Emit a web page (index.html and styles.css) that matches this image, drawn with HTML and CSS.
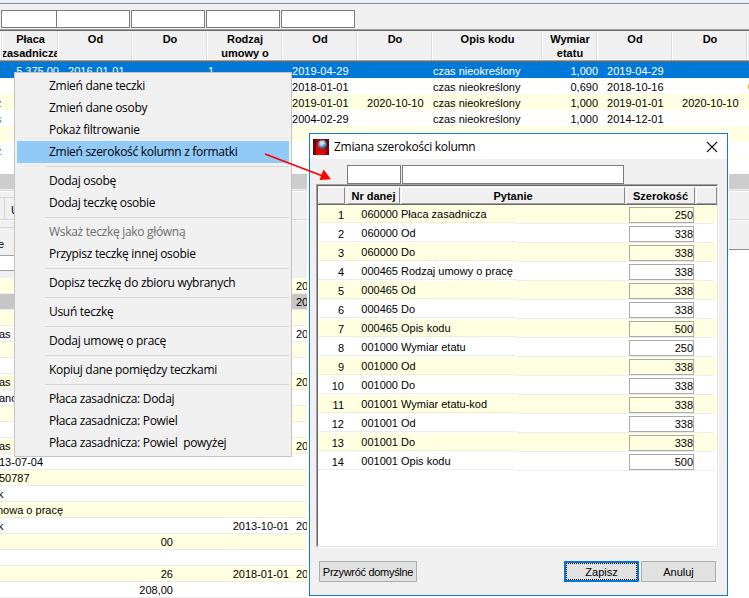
FILE: index.html
```html
<!DOCTYPE html>
<html lang="pl">
<head>
<meta charset="utf-8">
<title>Zmiana szerokości kolumn</title>
<link rel="stylesheet" href="styles.css">
</head>
<body>
<main class="app">
  <div class="topline"></div>
  <div class="filters"><i class="first"></i><i></i><i></i><i></i><i></i></div>
  <section class="people">
    <div class="cols head"><b></b><b>Płaca<br>zasadnicza</b><b>Od</b><b>Do</b><b>Rodzaj<br>umowy o</b><b>Od</b><b>Do</b><b>Opis kodu</b><b>Wymiar<br>etatu</b><b>Od</b><b>Do</b><b></b></div>
    <div class="cols row sel"><span></span><span class="num">5 375,00</span><span class="date">2016-01-01</span><span></span><span>1</span><span class="date">2019-04-29</span><span></span><span>czas nieokreślony</span><span class="num">1,000</span><span class="date">2019-04-29</span><span></span><span></span></div>
    <div class="cols row"><span></span><span></span><span></span><span></span><span></span><span class="date">2018-01-01</span><span></span><span>czas nieokreślony</span><span class="num">0,690</span><span class="date">2018-10-16</span><span></span><span class="amber">0</span></div>
    <div class="cols row alt"><span class="link">z</span><span></span><span></span><span></span><span></span><span class="date">2019-01-01</span><span class="date">2020-10-10</span><span>czas nieokreślony</span><span class="num">1,000</span><span class="date">2019-01-01</span><span class="date">2020-10-10</span><span></span></div>
    <div class="cols row"><span class="link">s</span><span></span><span></span><span></span><span></span><span class="date">2004-02-29</span><span></span><span>czas nieokreślony</span><span class="num">1,000</span><span class="date">2014-12-01</span><span></span><span></span></div>
    <div class="cols row alt"></div>
    <div class="cols row"><span class="link">z</span></div>
    <div class="thin"></div>
    <div class="track"></div>
  </section>
  <section class="band">
    <div class="band-a"></div>
    <div class="tabs"><i></i><span>U</span></div>
    <div class="band-b"></div>
  </section>
  <section class="details">
    <div class="caption">e</div>
    <div class="field"></div>
    <div class="gap"></div>
    <div class="drow alt"><span></span><span></span><span></span><span>20</span></div>
    <div class="drow cur"><span></span><span></span><span></span><span>20</span></div>
    <div class="drow alt"></div>
    <div class="drow"><span>as</span><span></span><span></span><span>20</span></div>
    <div class="drow alt"></div>
    <div class="drow"></div>
    <div class="drow alt"><span>as</span><span></span><span></span><span>20</span></div>
    <div class="drow"><span>ano</span></div>
    <div class="drow alt"></div>
    <div class="drow"></div>
    <div class="drow alt"><span>as</span><span></span><span></span><span>20</span></div>
    <div class="drow"><span>13-07-04</span></div>
    <div class="drow alt"><span>50787</span></div>
    <div class="drow"><span class="edge">k</span></div>
    <div class="drow alt"><span class="cut">nowa o pracę</span></div>
    <div class="drow"><span class="edge">k</span><span></span><span>2013-10-01</span><span>20</span></div>
    <div class="drow alt"><span></span><span>00</span></div>
    <div class="drow"></div>
    <div class="drow alt"><span></span><span>26</span><span>2018-01-01</span><span>20</span></div>
    <div class="drow"><span></span><span>208,00</span></div>
  </section>
</main>

<nav class="menu">
  <a>Zmień dane teczki</a>
  <a>Zmień dane osoby</a>
  <a>Pokaż filtrowanie</a>
  <a class="hot">Zmień szerokość kolumn z formatki</a>
  <hr>
  <a>Dodaj osobę</a>
  <a>Dodaj teczkę osobie</a>
  <hr>
  <a class="off">Wskaż teczkę jako główną</a>
  <a>Przypisz teczkę innej osobie</a>
  <hr>
  <a>Dopisz teczkę do zbioru wybranych</a>
  <hr>
  <a>Usuń teczkę</a>
  <hr>
  <a>Dodaj umowę o pracę</a>
  <hr>
  <a>Kopiuj dane pomiędzy teczkami</a>
  <hr>
  <a>Płaca zasadnicza: Dodaj</a>
  <a>Płaca zasadnicza: Powiel</a>
  <a>Płaca zasadnicza: Powiel&nbsp; powyżej</a>
</nav>

<section class="dialog">
  <header class="title">
    <svg class="logo" width="16" height="16" viewBox="0 0 16 16"><defs><linearGradient id="red" x1="0" y1="0" x2="0" y2="1"><stop offset="0" stop-color="#8c0c10"/><stop offset=".5" stop-color="#d80808"/><stop offset="1" stop-color="#e00404"/></linearGradient><radialGradient id="orb" cx=".4" cy=".35" r=".7"><stop offset="0" stop-color="#e4f4ff"/><stop offset=".5" stop-color="#6b9cc4"/><stop offset="1" stop-color="#24405e"/></radialGradient></defs><path fill="url(#red)" d="M0 0h16v16H0z"/><path fill="#400408" d="M0 0h3v16H0zM12 0h4v16h-3z" opacity=".65"/><circle cx="9.5" cy="5.500" r="4.500" fill="url(#orb)"/><path stroke="#fff" fill="none" d="M7 3l5 2M8 7l3-5" opacity=".7"/></svg>
    <span>Zmiana szerokości kolumn</span>
    <svg class="close" width="12" height="12" viewBox="0 0 12 12"><path d="M1 1l10 10M11 1L1 11" stroke="#111" stroke-width="1.1" fill="none"/></svg>
  </header>
  <div class="dfilters"><i></i><i></i></div>
  <div class="table">
    <div class="tcols thead"><b></b><b>Nr danej</b><b>Pytanie</b><b>Szerokość</b><b></b></div>
    <div class="tcols trow"><span>1</span><span>060000</span><span>Płaca zasadnicza</span><em>250</em></div>
    <div class="tcols trow"><span>2</span><span>060000</span><span>Od</span><em>338</em></div>
    <div class="tcols trow"><span>3</span><span>060000</span><span>Do</span><em>338</em></div>
    <div class="tcols trow"><span>4</span><span>000465</span><span>Rodzaj umowy o pracę</span><em>338</em></div>
    <div class="tcols trow"><span>5</span><span>000465</span><span>Od</span><em>338</em></div>
    <div class="tcols trow"><span>6</span><span>000465</span><span>Do</span><em>338</em></div>
    <div class="tcols trow"><span>7</span><span>000465</span><span>Opis kodu</span><em>500</em></div>
    <div class="tcols trow"><span>8</span><span>001000</span><span>Wymiar etatu</span><em>250</em></div>
    <div class="tcols trow"><span>9</span><span>001000</span><span>Od</span><em>338</em></div>
    <div class="tcols trow"><span>10</span><span>001000</span><span>Do</span><em>338</em></div>
    <div class="tcols trow"><span>11</span><span>001001</span><span>Wymiar etatu-kod</span><em>338</em></div>
    <div class="tcols trow"><span>12</span><span>001001</span><span>Od</span><em>338</em></div>
    <div class="tcols trow"><span>13</span><span>001001</span><span>Do</span><em>338</em></div>
    <div class="tcols trow"><span>14</span><span>001001</span><span>Opis kodu</span><em>500</em></div>
  </div>
  <footer class="buttons">
    <button class="reset">Przywróć domyślne</button>
    <button class="save">Zapisz</button>
    <button class="cancel">Anuluj</button>
  </footer>
</section>

<svg class="arrow" width="70" height="32" viewBox="0 0 70 32"><path d="M1 2L60 24.500" stroke="#f00" stroke-width="1.8"/><path d="M67 27.300L55.500 28L59.500 17.500z" fill="#f00"/></svg>
</body>
</html>
```
FILE: styles.css
```css
* { box-sizing: border-box; }

body {
  margin: 0;
  width: 749px;
  height: 598px;
  overflow: hidden;
  position: relative;
  background: #fff;
  color: #000;
  font: 11px/14px "Liberation Sans", Arial, sans-serif;
}

i, em { font-style: normal; }

.app { height: 598px; overflow: hidden; }
.topline { height: 4px; background: #f0f0f0; border-bottom: 1px solid #6c8ebf; }

.filters {
  height: 25px;
  padding: 6px 0 0 1px;
  background: #f0f0f0;
  display: flex;
  gap: 1px;
}
.filters i { width: 74px; height: 18px; background: #fff; border: 1px solid #7a7a7a; }
.filters .first { width: 56px; margin-right: -2px; }

.cols {
  display: grid;
  grid-template-columns: 2px 56px 74px 75px 75px 75px 75px 110px 55px 75px 75px 2px;
}
.head {
  height: 33px;
  background: #f0f0f0;
  border-top: 1px solid #a0a0a0;
  border-bottom: 1px solid #696969;
  box-shadow: inset 0 1px #696969, inset 0 -1px #a0a0a0;
  text-align: center;
}
.head b {
  margin: 2px 0 1px;
  border-left: 1px solid #fff;
  box-shadow: -1px 0 #dcdcdc;
  overflow: hidden;
  display: flex;
  justify-content: center;
  white-space: nowrap;
}

.row { height: 16px; line-height: 18px; white-space: nowrap; }
.row span { padding-left: 1px; height: 16px; }
.row .date { padding-left: 10px; letter-spacing: .03px; }
.row .num { text-align: right; padding: 0; margin-right: -1px; }
.row .link { color: #2d8bc9; padding: 0; overflow: hidden; text-indent: -4px; }
.row .amber { color: #c06000; overflow: hidden; }
.alt { background: #ffffe1; }
.sel { background: #0078d7; color: #fff; }
.thin { height: 16px; border-top: 1px solid #ffffe1; }
.track { height: 15px; background: #cdcdcd; }

.band { height: 61px; background: #f0f0f0; border-bottom: 1px solid #8a8a96; }
.band-a { height: 8px; box-shadow: inset 0 1px #f0f0f0, inset 0 2px #dadada, inset 0 3px #fff; }
.tabs {
  height: 24px;
  border-bottom: 1px solid #fff;
  box-shadow: inset 0 -1px #d5d5d5;
  display: flex;
}
.tabs i { width: 5px; height: 22px; border-top: 1px solid #d5d5d5; border-right: 1px solid #d5d5d5; }
.tabs span { width: 14px; padding: 5px 0 0 6px; border-top: 1px solid #d5d5d5; height: 22px; }
.band-b { height: 7px; width: 14px; border-bottom: 1px solid #d5d5d5; }

.details { width: 307px; margin-top: -22px; position: relative; overflow: hidden; background: #f0f0f0; }
.caption { height: 27px; padding-top: 9px; text-indent: -2px; }
.field { height: 16px; background: #fff; border-top: 1px solid #a0a0a0; border-bottom: 1px solid #a0a0a0; width: 14px; }
.gap { height: 7px; }
.drow {
  height: 16px;
  line-height: 17px;
  display: grid;
  grid-template-columns: 100px 73px 116px 18px;
  background: #fff;
  border-bottom: 1px solid #ececec;
  white-space: nowrap;
  overflow: hidden;
}
.drow span { text-align: right; }
.drow span:first-child { text-align: left; text-indent: -1px; }
.drow span.edge { text-indent: -2px; }
.drow span.cut { text-indent: -3px; }
.drow span:nth-child(4) { text-align: left; padding-left: 7px; overflow: hidden; }
.drow.alt { background: #ffffe1; }
.drow.cur { background: #c6c6c6; }

.menu {
  position: absolute;
  left: 14px;
  top: 72px;
  width: 278px;
  height: 385px;
  padding: 2px;
  background: #f0f0f0;
  border: 1px solid #c4c4c4;
  font: 12px/22px "Open Sans", "Noto Sans", sans-serif;
  letter-spacing: -.3px;
}
.menu a { display: block; height: 22px; padding-left: 32px; white-space: nowrap; }
.menu .hot { background: #91c9f7; }
.menu .off { color: #6d6d6d; }
.menu hr { height: 1px; margin: 3px 0 3px 28px; border: 0; background: #d4d4d4; }

.dialog {
  position: absolute;
  left: 309px;
  top: 133px;
  width: 419px;
  height: 463px;
  background: #f0f0f0;
  border: 1px solid #1878ca;
  box-shadow: -2px 0 #fff, 1px 0 #fff;
}
.title {
  height: 25px;
  padding: 0 9px 0 3px;
  background: #fff;
  display: flex;
  align-items: center;
  font: 12px/24px "Open Sans", "Noto Sans", sans-serif;
  letter-spacing: -.3px;
}
.title span { margin-left: 5px; flex: 1; white-space: nowrap; }
.dfilters { display: flex; gap: 1px; padding: 6px 0 0 37px; height: 25px; }
.dfilters i { width: 54px; height: 19px; background: #fff; border: 1px solid #7a7a7a; }
.dfilters i + i { width: 222px; }
.table {
  width: 402px;
  height: 363px;
  margin-left: 6px;
  background: #fff;
  border: 1px solid;
  border-color: #a0a0a0 #e3e3e3 #e3e3e3 #a0a0a0;
  box-shadow: inset 1px 1px #696969, 1px 1px #fff;
  padding: 1px 0 0 1px;
}
.tcols { display: grid; grid-template-columns: 28px 55px 225px 70px 21px; }
.thead {
  height: 19px;
  grid-template-columns: 28px 54px 225px 70px 22px;
  background: #f0f0f0;
  border-bottom: 1px solid #696969;
  text-align: center;
  line-height: 17px;
}
.thead b {
  margin: 1px 0 0 1px;
  border: 1px solid;
  border-color: #fff #8a8a8a #a0a0a0 #fff;
  overflow: hidden;
  white-space: nowrap;
}
.thead b:first-child { margin: 1px 1px 0 0; }
.trow {
  height: 19px;
  background: linear-gradient(#ececec, #ececec) 0 17px / 199px 1px no-repeat, linear-gradient(#ececec, #ececec) 199px 18px / 197px 1px no-repeat #fff;
}
.trow:nth-child(even) { background-color: #ffffe1; }
.trow span { line-height: 19px; white-space: nowrap; }
.trow span:nth-child(1) { text-align: right; padding: 1px 2px 0 0; }
.trow span:nth-child(2) { text-align: right; padding-right: 3px; }
.trow em { margin: 2px 2px 1px 3px; height: 16px; border: 1px solid #a9a9ad; text-align: right; line-height: 15px; }

.buttons { display: flex; padding: 14px 11px 0 9px; }
button {
  height: 21px;
  padding: 1px 0 0;
  width: 75px;
  border: 1px solid #adadad;
  background: #e1e1e1;
  color: #000;
  font: 11px/18px "Liberation Sans", Arial, sans-serif;
}
.reset { width: 98px; margin-right: auto; letter-spacing: -.3px; }
.save { border: 2px solid #0078d7; outline: 1px dotted #000; outline-offset: -3px; line-height: 16px; }
.cancel { margin-left: 2px; }

.arrow { position: absolute; left: 264px; top: 152px; }
```
